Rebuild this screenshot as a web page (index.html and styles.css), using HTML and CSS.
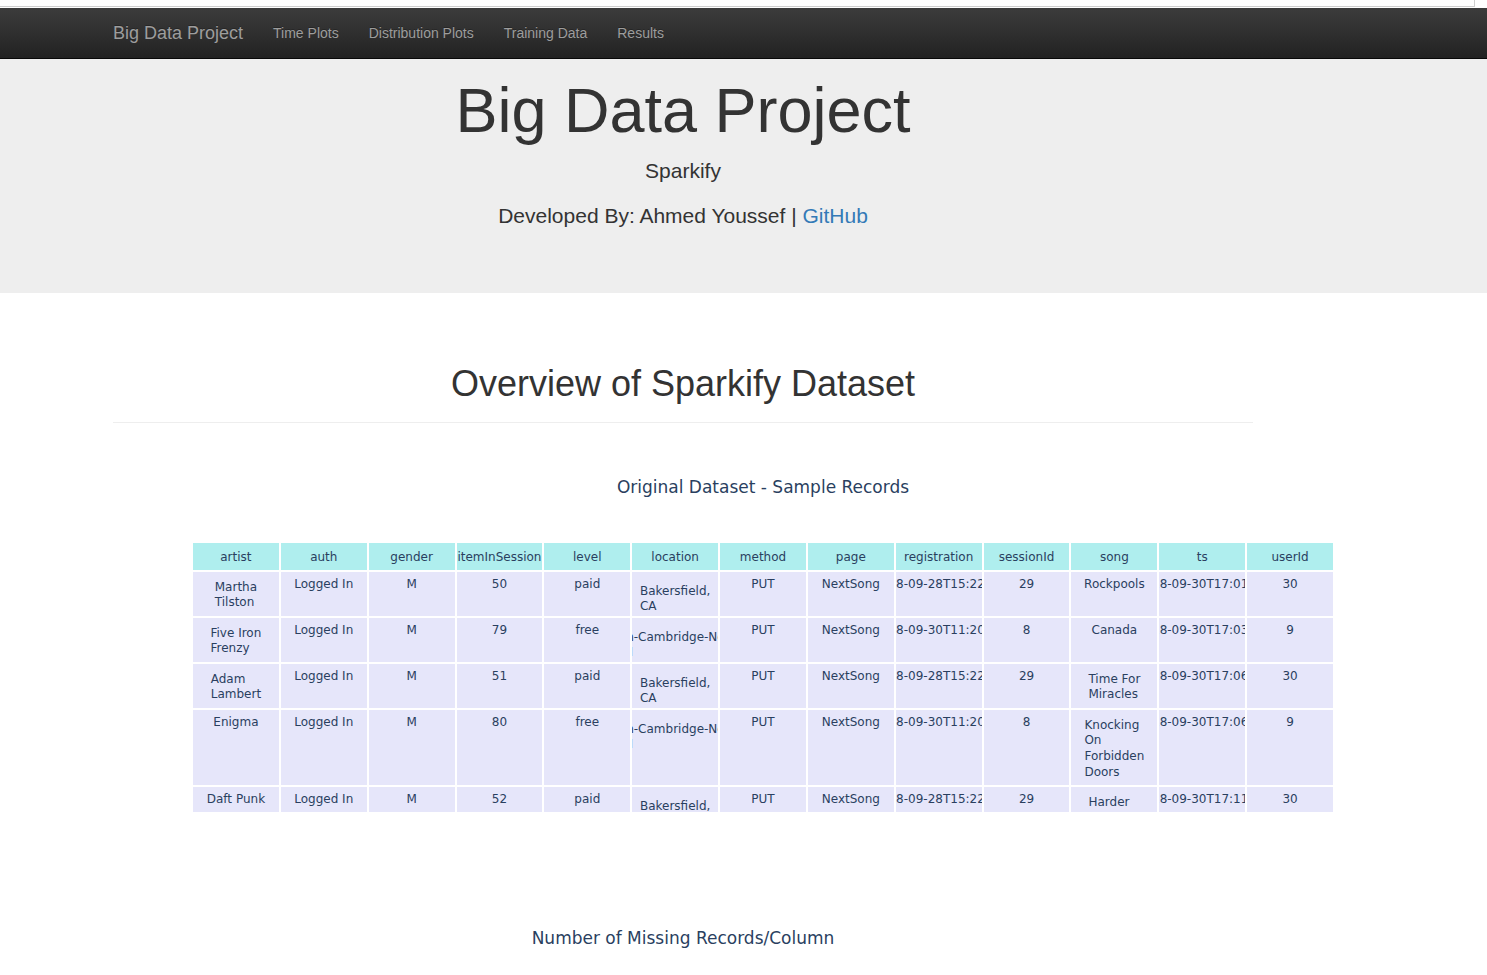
FILE: index.html
```html
<!DOCTYPE html>
<html>
<head>
<meta charset="utf-8">
<title>Big Data Project</title>
<link rel="stylesheet" href="styles.css">
</head>
<body>
<div class="topstrip"><div class="topbox"></div></div>
<nav class="navbar">
  <div class="page">
    <div class="container nav-inner">
      <a class="brand" href="#">Big Data Project</a>
      <a class="nav-link" href="#">Time Plots</a>
      <a class="nav-link" href="#">Distribution Plots</a>
      <a class="nav-link" href="#">Training Data</a>
      <a class="nav-link" href="#">Results</a>
    </div>
  </div>
</nav>
<header class="jumbotron">
  <div class="page">
    <div class="container jumbo-inner">
      <h1 class="jumbo-title">Big Data Project</h1>
      <p class="jumbo-text">Sparkify</p>
      <p class="jumbo-text">Developed By: Ahmed Youssef | <a class="gh" href="#">GitHub</a></p>
    </div>
  </div>
</header>
<main class="page">
  <div class="container">
    <div class="page-header">
      <h1 class="section-title">Overview of Sparkify Dataset</h1>
    </div>

    <section class="plot plot-wide">
      <div class="plot-title">Original Dataset - Sample Records</div>
      <div class="table-clip">
        <div class="ptable">
          <div class="hc"><span class="t">artist</span></div>
          <div class="hc"><span class="t">auth</span></div>
          <div class="hc"><span class="t">gender</span></div>
          <div class="hc"><span class="t">itemInSession</span></div>
          <div class="hc"><span class="t">level</span></div>
          <div class="hc"><span class="t">location</span></div>
          <div class="hc"><span class="t">method</span></div>
          <div class="hc"><span class="t">page</span></div>
          <div class="hc"><span class="t">registration</span></div>
          <div class="hc"><span class="t">sessionId</span></div>
          <div class="hc"><span class="t">song</span></div>
          <div class="hc"><span class="t">ts</span></div>
          <div class="hc"><span class="t">userId</span></div>

          <div class="bc w1"><span class="t">Martha<br>Tilston</span></div>
          <div class="bc"><span class="t">Logged In</span></div>
          <div class="bc"><span class="t">M</span></div>
          <div class="bc"><span class="t">50</span></div>
          <div class="bc"><span class="t">paid</span></div>
          <div class="bc w2"><span class="t">Bakersfield,<br>CA</span></div>
          <div class="bc"><span class="t">PUT</span></div>
          <div class="bc"><span class="t">NextSong</span></div>
          <div class="bc"><span class="t">2018-09-28T15:22:42</span></div>
          <div class="bc"><span class="t">29</span></div>
          <div class="bc"><span class="t">Rockpools</span></div>
          <div class="bc"><span class="t">2018-09-30T17:01:57</span></div>
          <div class="bc"><span class="t">30</span></div>

          <div class="bc w1"><span class="t">Five Iron<br>Frenzy</span></div>
          <div class="bc"><span class="t">Logged In</span></div>
          <div class="bc"><span class="t">M</span></div>
          <div class="bc"><span class="t">79</span></div>
          <div class="bc"><span class="t">free</span></div>
          <div class="bc w2"><span class="t">Boston-Cambridge-Newton,<br>MA-NH</span></div>
          <div class="bc"><span class="t">PUT</span></div>
          <div class="bc"><span class="t">NextSong</span></div>
          <div class="bc"><span class="t">2018-09-30T11:20:30</span></div>
          <div class="bc"><span class="t">8</span></div>
          <div class="bc"><span class="t">Canada</span></div>
          <div class="bc"><span class="t">2018-09-30T17:03:00</span></div>
          <div class="bc"><span class="t">9</span></div>

          <div class="bc w1"><span class="t">Adam<br>Lambert</span></div>
          <div class="bc"><span class="t">Logged In</span></div>
          <div class="bc"><span class="t">M</span></div>
          <div class="bc"><span class="t">51</span></div>
          <div class="bc"><span class="t">paid</span></div>
          <div class="bc w2"><span class="t">Bakersfield,<br>CA</span></div>
          <div class="bc"><span class="t">PUT</span></div>
          <div class="bc"><span class="t">NextSong</span></div>
          <div class="bc"><span class="t">2018-09-28T15:22:42</span></div>
          <div class="bc"><span class="t">29</span></div>
          <div class="bc w1"><span class="t">Time For<br>Miracles</span></div>
          <div class="bc"><span class="t">2018-09-30T17:06:34</span></div>
          <div class="bc"><span class="t">30</span></div>

          <div class="bc"><span class="t">Enigma</span></div>
          <div class="bc"><span class="t">Logged In</span></div>
          <div class="bc"><span class="t">M</span></div>
          <div class="bc"><span class="t">80</span></div>
          <div class="bc"><span class="t">free</span></div>
          <div class="bc w2"><span class="t">Boston-Cambridge-Newton,<br>MA-NH</span></div>
          <div class="bc"><span class="t">PUT</span></div>
          <div class="bc"><span class="t">NextSong</span></div>
          <div class="bc"><span class="t">2018-09-30T11:20:30</span></div>
          <div class="bc"><span class="t">8</span></div>
          <div class="bc w1"><span class="t">Knocking<br>On<br>Forbidden<br>Doors</span></div>
          <div class="bc"><span class="t">2018-09-30T17:06:56</span></div>
          <div class="bc"><span class="t">9</span></div>

          <div class="bc"><span class="t">Daft Punk</span></div>
          <div class="bc"><span class="t">Logged In</span></div>
          <div class="bc"><span class="t">M</span></div>
          <div class="bc"><span class="t">52</span></div>
          <div class="bc"><span class="t">paid</span></div>
          <div class="bc w2"><span class="t">Bakersfield,<br>CA</span></div>
          <div class="bc"><span class="t">PUT</span></div>
          <div class="bc"><span class="t">NextSong</span></div>
          <div class="bc"><span class="t">2018-09-28T15:22:42</span></div>
          <div class="bc"><span class="t">29</span></div>
          <div class="bc w1h"><span class="t">Harder<br>Better<br>Faster<br>Stronger</span></div>
          <div class="bc"><span class="t">2018-09-30T17:11:16</span></div>
          <div class="bc"><span class="t">30</span></div>
        </div>
      </div>
    </section>

    <section class="plot">
      <div class="plot-title second">Number of Missing Records/Column</div>
    </section>
  </div>
</main>
</body>
</html>
```

FILE: styles.css
```css
html, body {
  margin: 0;
  padding: 0;
  background: #fff;
}
body {
  font-family: "Liberation Sans", Arial, Helvetica, sans-serif;
  font-size: 14px;
  color: #333;
  overflow: hidden;
}
.topstrip {
  height: 8px;
  background: #fff;
}
.topbox {
  width: 1474px;
  height: 6px;
  border-right: 1px solid #cfcfcf;
  border-bottom: 1px solid #cfcfcf;
}
.page {
  width: 1366px;
}
.container {
  width: 1170px;
  margin: 0 auto;
  padding: 0 15px;
  box-sizing: border-box;
}
.navbar {
  height: 50px;
  background: linear-gradient(to bottom, #3c3c3c 0%, #222 100%);
  border-bottom: 1px solid #080808;
}
.nav-inner {
  display: flex;
  align-items: center;
  height: 50px;
}
.brand {
  font-size: 18px;
  color: #9d9d9d;
  text-decoration: none;
  padding-right: 15px;
  text-shadow: 0 -1px 0 rgba(0,0,0,.25);
}
.nav-link {
  font-size: 14px;
  color: #9d9d9d;
  text-decoration: none;
  padding: 0 15px;
  text-shadow: 0 -1px 0 rgba(0,0,0,.25);
}
.jumbotron {
  background: #eee;
  padding: 17px 0 47px;
}
.jumbo-inner {
  text-align: center;
}
.jumbo-title {
  font-size: 63px;
  font-weight: normal;
  line-height: 69.3px;
  margin: 0 0 11px;
  color: #333;
}
.jumbo-text {
  font-size: 21px;
  line-height: 30px;
  margin: 0 0 15px;
  color: #333;
}
.gh {
  color: #337ab7;
  text-decoration: none;
}
.page-header {
  margin-top: 71px;
  padding-bottom: 9px;
  border-bottom: 1px solid #eee;
}
.section-title {
  font-size: 36px;
  font-weight: normal;
  line-height: 39.6px;
  margin: 0 0 9px;
  text-align: center;
  color: #333;
}
.plot {
  font-family: "DejaVu Sans", Verdana, sans-serif;
  color: #2a3f5f;
}
.plot-wide {
  width: 1300px;
  margin-top: 54px;
}
.plot-title {
  font-size: 17px;
  line-height: 20px;
  text-align: center;
}
.plot-title.second {
  margin-top: 116px;
}
.table-clip {
  margin: 46px 0 0 80px;
  width: 1140px;
  height: 269px;
  overflow: hidden;
}
.ptable {
  display: grid;
  grid-template-columns: repeat(13, 1fr);
  grid-template-rows: 27px 44px 44px 44px 75px 75px;
  gap: 2px;
  background: #fff;
  font-size: 12px;
  line-height: 15.6px;
}
.hc, .bc {
  display: flex;
  flex-direction: column;
  align-items: center;
  overflow: hidden;
  box-sizing: border-box;
}
.hc {
  background: #afeeee;
  padding-top: 7px;
}
.bc {
  background: #e6e6fa;
  padding-top: 5px;
}
.bc.w1 { padding-top: 8px; }
.bc.w1h { padding-top: 8px; }
.bc.w2 { padding-top: 12px; }
.t {
  white-space: nowrap;
  text-align: left;
  flex: none;
}
```
